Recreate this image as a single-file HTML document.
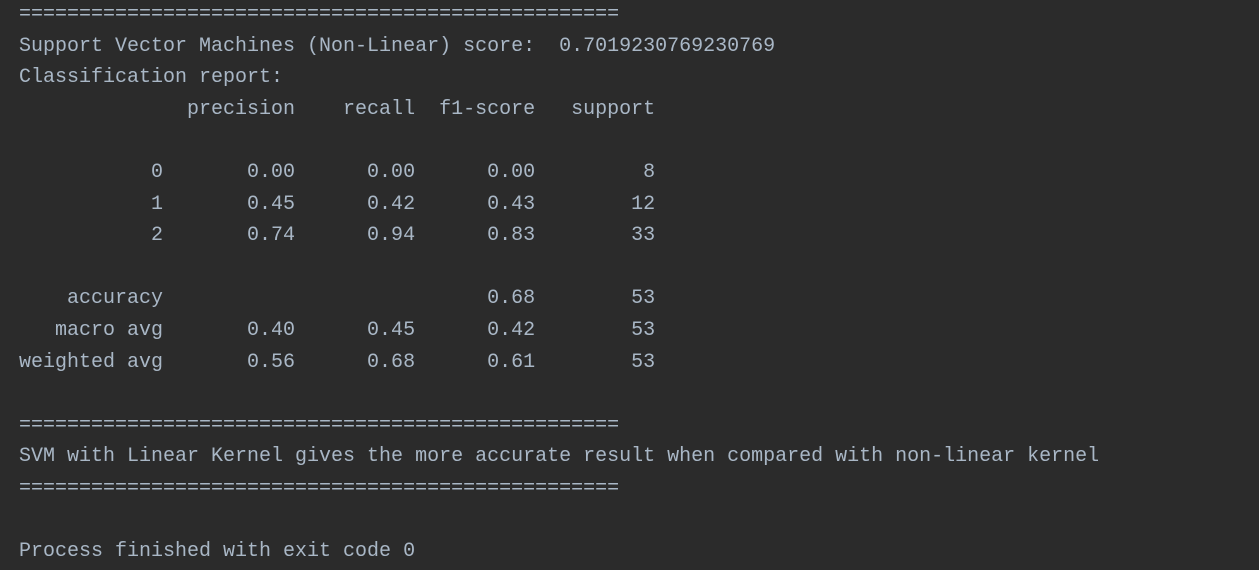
<!DOCTYPE html>
<html><head><meta charset="utf-8"><style>
html,body{margin:0;padding:0;background:#2b2b2b;width:1259px;height:570px;overflow:hidden}
pre{position:absolute;left:19px;top:-1px;margin:0;font-family:"Liberation Mono","DejaVu Sans Mono",monospace;font-size:20px;line-height:31.6px;color:#a9b7c6;white-space:pre}
</style></head><body><pre>==================================================
Support Vector Machines (Non-Linear) score:  0.7019230769230769
Classification report:
              precision    recall  f1-score   support

           0       0.00      0.00      0.00         8
           1       0.45      0.42      0.43        12
           2       0.74      0.94      0.83        33

    accuracy                           0.68        53
   macro avg       0.40      0.45      0.42        53
weighted avg       0.56      0.68      0.61        53

==================================================
SVM with Linear Kernel gives the more accurate result when compared with non-linear kernel
==================================================

Process finished with exit code 0</pre></body></html>
